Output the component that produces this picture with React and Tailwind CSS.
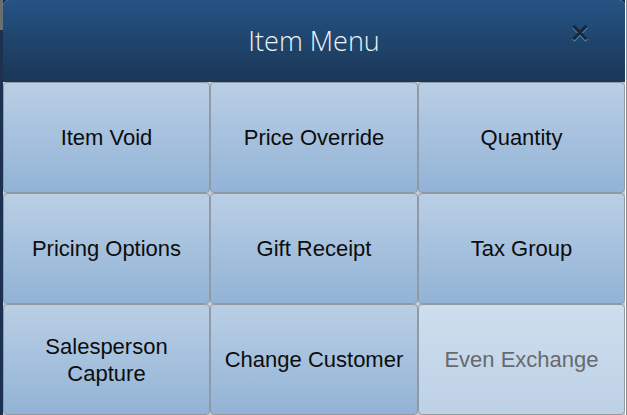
const items = [
  { label: 'Item Void' },
  { label: 'Price Override' },
  { label: 'Quantity' },
  { label: 'Pricing Options' },
  { label: 'Gift Receipt' },
  { label: 'Tax Group' },
  { label: 'Salesperson\nCapture' },
  { label: 'Change Customer' },
  { label: 'Even Exchange', disabled: true },
]

export default function App() {
  return (
    <div className="w-[627px] h-[415px] flex overflow-hidden bg-[#1d2c3e]">
      <div className="w-[3px] flex flex-col">
        <div className="h-[30px] bg-[#6b6f74]" />
        <div className="flex-1 bg-[#1c3050]" />
      </div>
      <div className="w-[622px] flex flex-col bg-[#c9ced3] rounded-t-[6px] overflow-hidden">
        <div className="h-[82px] relative flex items-center justify-center bg-gradient-to-b from-[#255384] to-[#1a3756]">
          <span
            className="text-[27px] text-[#eef3f8] font-light"
            style={{ fontFamily: '"Open Sans", "Noto Sans", sans-serif' }}
          >
            Item Menu
          </span>
          <span
            className="absolute left-[566px] top-[19px] text-[26px] font-bold text-[#17283c] leading-none [text-shadow:0_1px_0_#7f98b3]"
            style={{ fontFamily: '"DejaVu Sans", sans-serif' }}
          >
            ×
          </span>
        </div>
        <div className="flex-1 grid grid-cols-[207px_208px_207px] grid-rows-3">
          {items.map((it) => (
            <button
              key={it.label}
              className={
                'border border-[#8f9aa5] rounded-[4px] flex items-center justify-center text-center whitespace-pre-line leading-[27px] text-[22px] ' +
                (it.disabled
                  ? 'bg-gradient-to-b from-[#cedeed] to-[#bdd1e6] text-[#676a6e]'
                  : 'bg-gradient-to-b from-[#bacfe5] to-[#92b3d6] text-[#0d0d0d]')
              }
              style={{ fontFamily: '"Liberation Sans", Arial, sans-serif' }}
            >
              {it.label}
            </button>
          ))}
        </div>
      </div>
      <div className="w-[2px] flex">
        <div className="w-[1px] bg-white" />
        <div className="w-[1px] bg-[#8a8f94]" />
      </div>
    </div>
  )
}
